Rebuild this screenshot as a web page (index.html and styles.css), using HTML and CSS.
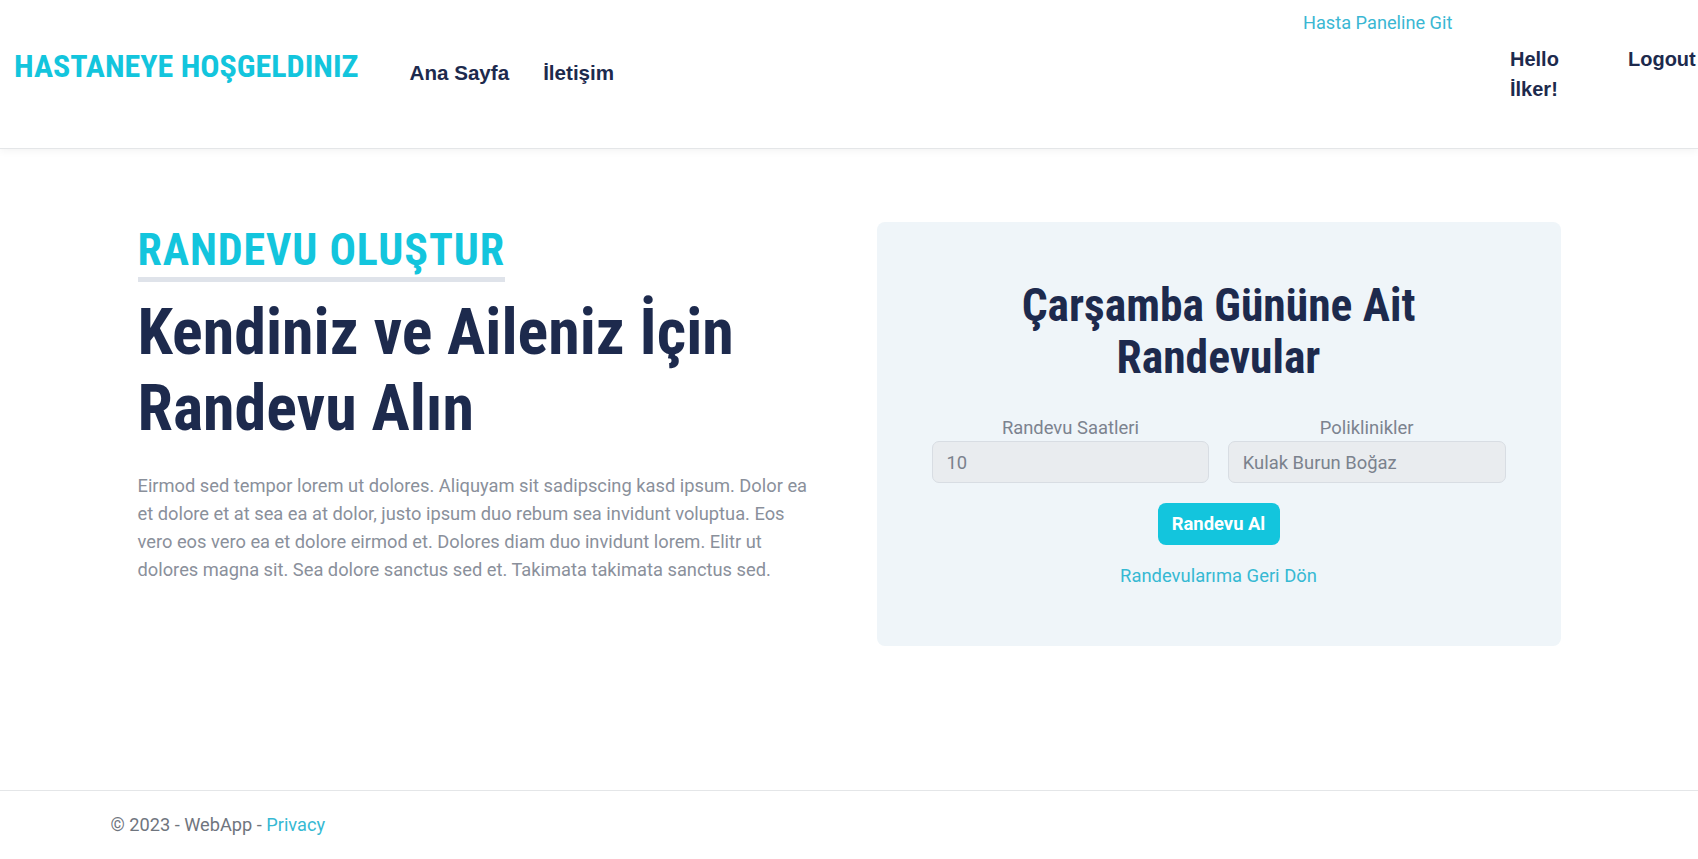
FILE: index.html
```html
<!DOCTYPE html>
<html lang="tr">
<head>
<meta charset="utf-8">
<title>Randevu</title>
<link rel="stylesheet" href="styles.css">
</head>
<body>
<header class="site-header">
  <a class="brand" href="#">HASTANEYE HOŞGELDINIZ</a>
  <nav class="main-nav">
    <a href="#">Ana Sayfa</a>
    <a href="#">İletişim</a>
  </nav>
  <div class="user-area">
    <a class="panel-link" href="#">Hasta Paneline Git</a>
    <div class="user-row">
      <span class="hello">Hello İlker!</span>
      <a class="logout" href="#">Logout</a>
    </div>
  </div>
</header>

<main class="main">
  <div class="container">
    <section class="intro">
      <h5 class="eyebrow">RANDEVU OLUŞTUR</h5>
      <h1 class="headline">Kendiniz ve Aileniz İçin Randevu Alın</h1>
      <p class="lead-text">Eirmod sed tempor lorem ut dolores. Aliquyam sit sadipscing kasd ipsum. Dolor ea et dolore et at sea ea at dolor, justo ipsum duo rebum sea invidunt voluptua. Eos vero eos vero ea et dolore eirmod et. Dolores diam duo invidunt lorem. Elitr ut dolores magna sit. Sea dolore sanctus sed et. Takimata takimata sanctus sed.</p>
    </section>
    <section class="card">
      <h2 class="card-title">Çarşamba Gününe Ait Randevular</h2>
      <form class="form">
        <div class="fields">
          <label class="field">
            <span class="field-label">Randevu Saatleri</span>
            <input class="input" type="text" value="10" disabled>
          </label>
          <label class="field">
            <span class="field-label">Poliklinikler</span>
            <input class="input" type="text" value="Kulak Burun Boğaz" disabled>
          </label>
        </div>
        <button class="btn" type="button">Randevu Al</button>
        <a class="back-link" href="#">Randevularıma Geri Dön</a>
      </form>
    </section>
  </div>
</main>

<footer class="site-footer">
  <div class="footer-inner">© 2023 - WebApp - <a href="#">Privacy</a></div>
</footer>
</body>
</html>
```
FILE: styles.css
```css
* { box-sizing: border-box; }
html, body { margin: 0; padding: 0; }
body {
  font-family: "Roboto", "Liberation Sans", sans-serif;
  font-size: 18.4px;
  line-height: 27.6px;
  color: #8a909b;
  background: #fff;
}
a { text-decoration: none; }

.site-header {
  height: 149px;
  display: flex;
  align-items: flex-start;
  border-bottom: 1px solid #e4e6e8;
  box-shadow: 0 2px 8px rgba(0,0,0,0.05);
  position: relative;
}
.brand {
  font-family: "Roboto Condensed", "Liberation Sans Narrow", sans-serif;
  font-weight: 700;
  font-size: 32px;
  line-height: 38px;
  color: #13c5dd;
  margin: 47px 0 0 14px;
}
.main-nav {
  display: flex;
  gap: 34px;
  margin: 58px 0 0 51px;
}
.main-nav a, .hello, .logout {
  font-family: "Liberation Sans", Arial, sans-serif;
  font-weight: 700;
  font-size: 20.6px;
  line-height: 30px;
  color: #1d2a4d;
}
.hello, .logout { font-size: 20px; }
.user-area {
  margin-left: auto;
  width: 395px;
  display: flex;
  flex-direction: column;
  padding-top: 9px;
}
.panel-link {
  color: #3ab7d3;
  font-size: 18.2px;
}
.user-row {
  display: flex;
  justify-content: flex-end;
  margin-top: 7px;
}
.hello {
  width: 60px;
  margin-right: 58px;
}
.logout { width: 70px; }

.main {
  padding: 72.5px 0 144px;
}
.container {
  width: 1423px;
  margin: 0 auto;
  display: flex;
  align-items: flex-start;
  gap: 55px;
}
.intro {
  width: 684px;
  flex: none;
}
.eyebrow {
  display: inline-block;
  margin: 0;
  font-family: "Roboto Condensed", "Liberation Sans Narrow", sans-serif;
  font-weight: 700;
  font-size: 44px;
  line-height: 52.8px;
  letter-spacing: 0.9px;
  color: #13c5dd;
  padding-top: 2px;
  padding-bottom: 1px;
  border-bottom: 5px solid #dfe3ea;
}
.headline {
  margin: 12.5px 0 0;
  font-family: "Roboto Condensed", "Liberation Sans Narrow", sans-serif;
  font-weight: 700;
  font-size: 64px;
  line-height: 76px;
  color: #1d2a4d;
}
.lead-text {
  margin: 25.5px 0 0;
  max-width: 676px;
  font-size: 18.3px;
  line-height: 27.8px;
}

.card {
  width: 684px;
  flex: none;
  background: #eff5f9;
  border-radius: 8px;
  padding: 52px 55px 56px;
  text-align: center;
}
.card-title {
  margin: 6px 0 30px;
  font-family: "Roboto Condensed", "Liberation Sans Narrow", sans-serif;
  font-weight: 700;
  font-size: 45.5px;
  line-height: 52px;
  color: #1d2a4d;
  padding: 0 40px;
}
.form {
  display: flex;
  flex-direction: column;
  align-items: center;
}
.fields {
  display: flex;
  gap: 18.5px;
  width: 100%;
}
.field {
  flex: 1;
  display: flex;
  flex-direction: column;
}
.field-label {
  color: #7c838f;
}
.input {
  height: 42px;
  width: 100%;
  background: #e9ecef;
  border: 1px solid #d8dde3;
  border-radius: 7px;
  padding: 0 14px;
  font-family: "Roboto", sans-serif;
  font-size: 18.4px;
  color: #7b828d;
}
.btn {
  margin-top: 19.5px;
  height: 42px;
  width: 122px;
  border: none;
  border-radius: 8px;
  background: #13c5dd;
  color: #fff;
  font-family: "Roboto", sans-serif;
  font-weight: 700;
  font-size: 18.4px;
}
.back-link {
  margin-top: 17.5px;
  color: #36b9d3;
}

.site-footer {
  border-top: 1px solid #e4e6e8;
  padding: 20px 0 22px 110.5px;
  color: #6f757e;
  font-size: 18.2px;
}
.site-footer a { color: #36b9d3; }
```
